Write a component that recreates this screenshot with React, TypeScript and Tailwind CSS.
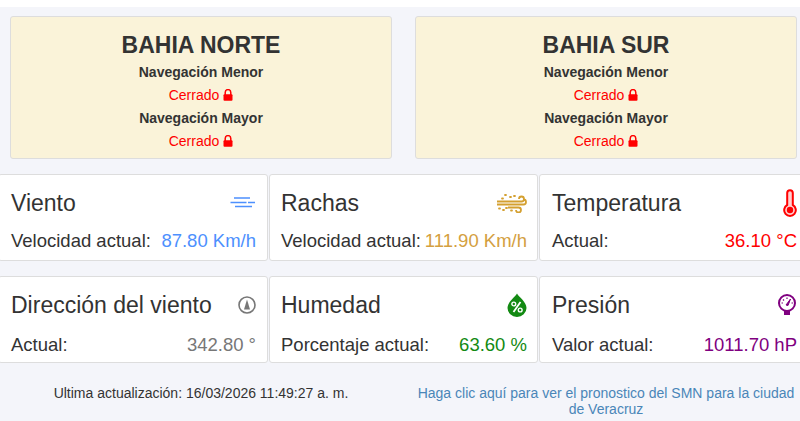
import React from "react";

function Lock() {
  return (
    <svg width="10" height="12" viewBox="0 0 10 12" className="inline-block ml-[4px] mb-[2px]">
      <path d="M2.2 6V3.4a2.8 2.8 0 0 1 5.600 0V6" fill="none" stroke="#ff0000" strokeWidth="1.500" />
      <rect x="0.500" y="5.200" width="9" height="6.600" rx="1" fill="#ff0000" />
    </svg>
  );
}

function Wind1() {
  return (
    <svg width="26" height="13" viewBox="0 0 26 13" fill="none" stroke="#4d90fe" strokeWidth="1.300">
      <path d="M4 2h16M0.500 6.500h16M18 6.500h7M5 10.500h17" />
    </svg>
  );
}

function Wind2() {
  return (
    <svg width="31" height="20" viewBox="0 0 31 20" fill="none" stroke="#d4a030">
      <path d="M1 8.500h24.500a2.500 2.500 0 1 0-2.500-2.500M1 11.500h26.500a2.500 2.500 0 0 0 0-5M12 14.500h10.500a2.500 2.500 0 1 1-2.500 2.500" strokeWidth="1.800" />
      <path d="M6 5.500h1M9 2h1M14 4h1M18 3h1M3 15.500h1M7 17h1M10 15h1M15 17.500h1" strokeWidth="1.800" strokeLinecap="round" />
    </svg>
  );
}

function Thermo() {
  return (
    <svg width="14" height="28" viewBox="0 0 14 28">
      <path d="M4.200 16V4a2.800 2.800 0 0 1 5.600 0v12a5.800 5.800 0 1 1-5.600 0z" fill="#ffd0d0" stroke="#ff0000" strokeWidth="2" />
      <circle cx="7" cy="21" r="3.200" fill="#ff0000" />
    </svg>
  );
}

function Compass() {
  return (
    <svg width="18" height="18" viewBox="0 0 18 18">
      <circle cx="9" cy="9" r="8" fill="none" stroke="#777777" strokeWidth="1.600" />
      <path d="M9 3.500L12 13.500H6z" fill="#777777" />
    </svg>
  );
}

function Drop() {
  return (
    <svg width="20" height="24" viewBox="0 0 20 24">
      <path d="M10 0.500C12 4 19.500 9 19.500 15a9.500 9 0 0 1-19 0C0.500 9 8 4 10 0.500z" fill="#138a13" />
      <path d="M13.500 9L6.500 19" stroke="#ffffff" strokeWidth="1.800" />
      <circle cx="6.800" cy="11" r="1.900" fill="none" stroke="#ffffff" strokeWidth="1.400" />
      <circle cx="13.200" cy="17" r="1.900" fill="none" stroke="#ffffff" strokeWidth="1.400" />
    </svg>
  );
}

function Gauge() {
  return (
    <svg width="20" height="22" viewBox="0 0 20 22">
      <circle cx="10" cy="9" r="8" fill="#ffffff" stroke="#800080" strokeWidth="2" />
      <path d="M7 16.500h6V21H7z" fill="#800080" />
      <path d="M9 11L13.500 5L11 11.500z" fill="#800080" stroke="#800080" />
      <path d="M4.500 9h1.500M6 5.500l1 1M10 3.500v1.500M14.500 9H16" stroke="#800080" strokeWidth="1.200" />
    </svg>
  );
}

function Bay({ name }: { name: string }) {
  return (
    <div className="w-[382px] h-[143px] bg-[#faf3d9] border border-[#dddddd] rounded-[3px] flex flex-col items-center pt-[15px] text-[#333333]">
      <h2 className="text-[23px] leading-[27px] font-bold">{name}</h2>
      <div className="text-[14px] leading-[20px] font-bold mt-[3px]">Navegación Menor</div>
      <div className="text-[14px] leading-[20px] text-[#ff0000] mt-[3px]">Cerrado<Lock /></div>
      <div className="text-[14px] leading-[20px] font-bold mt-[3px]">Navegación Mayor</div>
      <div className="text-[14px] leading-[20px] text-[#ff0000] mt-[3px]">Cerrado<Lock /></div>
    </div>
  );
}

function Card({ w, pl, pr, rowH, title, label, value, color, icon }: { w: string; pl: string; pr: string; rowH: string; title: string; label: string; value: string; color: string; icon: React.ReactNode }) {
  return (
    <div className={`${w} ${pl} ${pr} h-[87px] shrink-0 bg-white border border-[#dddddd] rounded-[3px] flex flex-col text-[#333333]`}>
      <div className="flex justify-between items-center h-[55px]">
        <span className="text-[23px] leading-[26px]">{title}</span>
        {icon}
      </div>
      <div className={`flex justify-between items-center ${rowH} text-[18.500px] whitespace-nowrap`}>
        <span>{label}</span>
        <span className={color}>{value}</span>
      </div>
    </div>
  );
}

export default function App() {
  return (
    <div className="w-[800px] h-[421px] overflow-hidden bg-white font-['Liberation_Sans',sans-serif]">
      <div className="mt-[7px] h-[414px] bg-[#f4f5fa] flex flex-col">
        <div className="flex gap-[23px] ml-[10px] mt-[9px]">
          <Bay name="BAHIA NORTE" />
          <Bay name="BAHIA SUR" />
        </div>
        <div className="flex ml-[-2px] gap-[1px] mt-[15px]">
          <Card w="w-[270px]" pl="pl-[12px]" pr="pr-[11px]" rowH="h-[22px]" title="Viento" label="Velocidad actual:" value="87.80 Km/h" color="text-[#4d90fe]" icon={<Wind1 />} />
          <Card w="w-[269px]" pl="pl-[11px]" pr="pr-[10px]" rowH="h-[22px]" title="Rachas" label="Velocidad actual:" value="111.90 Km/h" color="text-[#d4a040]" icon={<Wind2 />} />
          <Card w="w-[264px]" pl="pl-[12px]" pr="pr-[5px]" rowH="h-[22px]" title="Temperatura" label="Actual:" value="36.10 °C" color="text-[#ff0000]" icon={<Thermo />} />
        </div>
        <div className="flex ml-[-2px] gap-[1px] mt-[15px]">
          <Card w="w-[270px]" pl="pl-[12px]" pr="pr-[11px]" rowH="h-[25px]" title="Dirección del viento" label="Actual:" value="342.80 °" color="text-[#777777]" icon={<Compass />} />
          <Card w="w-[269px]" pl="pl-[11px]" pr="pr-[10px]" rowH="h-[25px]" title="Humedad" label="Porcentaje actual:" value="63.60 %" color="text-[#138a13]" icon={<Drop />} />
          <Card w="w-[264px]" pl="pl-[12px]" pr="pr-[5px]" rowH="h-[25px]" title="Presión" label="Valor actual:" value="1011.70 hP" color="text-[#800080]" icon={<Gauge />} />
        </div>
        <div className="flex text-[14px] leading-[16px] mt-[22px]">
          <div className="w-[402px] text-center text-[#333333]">Ultima actualización: 16/03/2026 11:49:27 a. m.</div>
          <a className="w-[386px] ml-[11px] text-center text-[#4a86b8]">Haga clic aquí para ver el pronostico del SMN para la ciudad de Veracruz</a>
        </div>
      </div>
    </div>
  );
}
